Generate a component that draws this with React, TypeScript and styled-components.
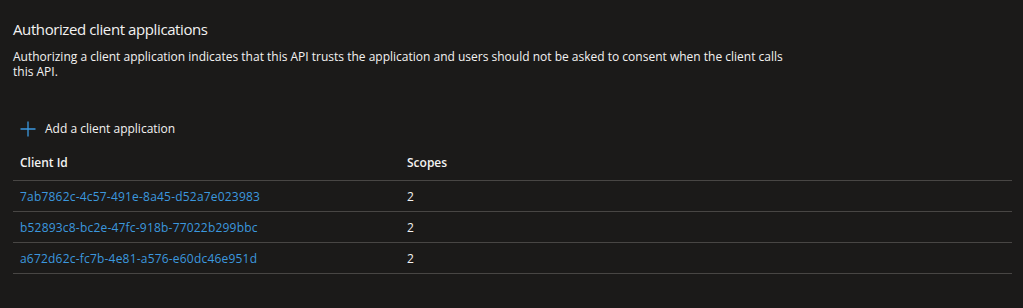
import React from 'react';
import styled, { createGlobalStyle } from 'styled-components';

const GlobalStyle = createGlobalStyle`
  html, body {
    margin: 0;
    padding: 0;
    background: #1b1a19;
  }
  body {
    font-family: 'Open Sans', 'Noto Sans', sans-serif;
    color: #f3f2f1;
  }
`;

type Client = { id: string; scopes: number };

const clients: Client[] = [
  { id: '7ab7862c-4c57-491e-8a45-d52a7e023983', scopes: 2 },
  { id: 'b52893c8-bc2e-47fc-918b-77022b299bbc', scopes: 2 },
  { id: 'a672d62c-fc7b-4e81-a576-e60dc46e951d', scopes: 2 },
];

const PlusIcon = () => (
  <svg width='16' height='16' viewBox='0 0 16 16'>
    <path d='M8 0.5v15M0.5 8h15' stroke='#3b98df' strokeWidth='1.3' fill='none' />
  </svg>
);

const App = () => {
  return (
    <Page>
      <GlobalStyle />
      <Title>Authorized client applications</Title>
      <Description>
        Authorizing a client application indicates that this API trusts the application and users
        should not be asked to consent when the client calls this API.
      </Description>
      <AddButton>
        <PlusIcon />
        Add a client application
      </AddButton>
      <Table>
        <HeaderRow>
          <HeaderCell>Client Id</HeaderCell>
          <HeaderCell>Scopes</HeaderCell>
        </HeaderRow>
        {clients.map((client) => (
          <Row key={client.id}>
            <LinkCell href='#'>{client.id}</LinkCell>
            <Cell>{client.scopes}</Cell>
          </Row>
        ))}
      </Table>
    </Page>
  );
};

const Page = styled.div`
  width: 1023px;
  height: 308px;
  box-sizing: border-box;
  padding: 17px 11px 0 13px;
  background: #1b1a19;
  overflow: hidden;
`;

const Title = styled.h2`
  margin: 0;
  font-size: 15px;
  font-weight: 400;
  letter-spacing: -0.4px;
  line-height: 24px;
`;

const Description = styled.p`
  margin: 8px 0 0;
  width: 790px;
  font-size: 12px;
  line-height: 15px;
`;

const AddButton = styled.button`
  display: flex;
  align-items: center;
  gap: 9px;
  margin: 42px 0 0 7px;
  padding: 0;
  border: none;
  background: none;
  color: #f3f2f1;
  font-family: inherit;
  font-size: 12px;
  line-height: 16px;
  cursor: pointer;
`;

const Table = styled.div`
  margin-top: 7px;
  display: flex;
  flex-direction: column;
`;

const HeaderRow = styled.div`
  display: grid;
  grid-template-columns: 387px 1fr;
  height: 36px;
  align-items: center;
  border-bottom: 1px solid #484644;
`;

const Row = styled(HeaderRow)`
  height: 30px;
`;

const HeaderCell = styled.div`
  padding-left: 7px;
  font-size: 12px;
  font-weight: 600;
`;

const Cell = styled.div`
  padding-left: 7px;
  font-size: 12px;
`;

const LinkCell = styled.a`
  padding-left: 7px;
  font-size: 12px;
  letter-spacing: 0.2px;
  color: #3b98df;
  text-decoration: none;
`;

export default App;
